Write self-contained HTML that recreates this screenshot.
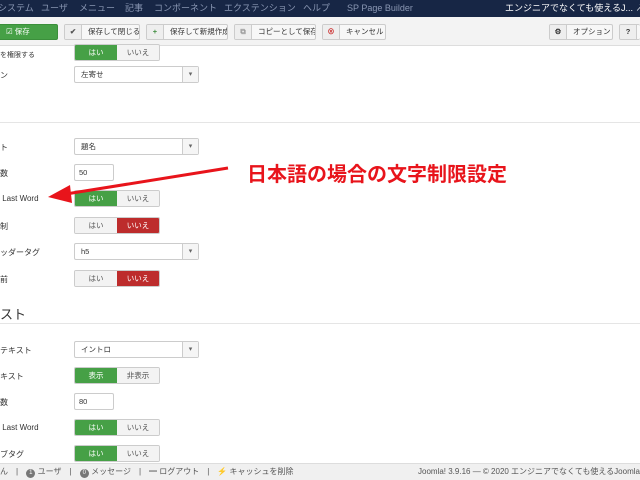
<!DOCTYPE html>
<html><head><meta charset="utf-8"><style>
*{box-sizing:border-box;margin:0;padding:0}
body{width:640px;height:480px;overflow:hidden;background:#fff;font-family:"Liberation Sans","Noto Sans CJK JP",sans-serif;font-size:8px;color:#333;position:relative}
.a{position:absolute}
.nav{left:0;top:0;width:640px;height:17px;background:#172645;color:#8a97b3;font-size:9px;line-height:17px;white-space:nowrap;overflow:hidden}
.nav span{position:absolute;top:0}
.tb{left:0;top:17px;width:640px;height:29px;background:#f3f3f3;border-bottom:1px solid #ddd}
.btn{position:absolute;top:24px;height:16px;background:#f7f7f7;border:1px solid #ccc;border-radius:2px;font-size:7.5px;line-height:14px;color:#333;white-space:nowrap;overflow:hidden}
.btn i{display:inline-block;width:17px;height:14px;border-right:1px solid #ccc;text-align:center;font-style:normal;font-weight:bold;margin-right:6px;background:#eee}
.lab{position:absolute;left:0;font-size:8px;color:#333;white-space:nowrap}
.sel{position:absolute;left:74px;width:125px;height:17px;border:1px solid #ccc;border-radius:2px;background:#fff;font-size:7.5px;line-height:15px;padding-left:6px}
.sel:after{content:"▾";position:absolute;right:0;top:0;width:15px;height:15px;border-left:1px solid #ccc;background:#f5f5f5;text-align:center;font-size:7px;color:#666}
.inp{position:absolute;left:74px;width:40px;height:17px;border:1px solid #ccc;border-radius:2px;font-size:7.5px;line-height:15px;padding-left:4px}
.tg{position:absolute;left:74px;width:86px;height:17px;border:1px solid #ccc;border-radius:2px;display:flex;font-size:7.5px;line-height:15px;overflow:hidden}
.tg span{flex:1;text-align:center;background:#f3f3f3;color:#555}
.tg .g{background:#46a046;color:#fff}
.tg .r{background:#bd2c2c;color:#fff}
.hr{position:absolute;left:0;width:640px;height:1px;background:#e5e5e5}
.ft{left:0;top:463px;width:640px;height:17px;background:#f0f0f0;border-top:1px solid #ddd;font-size:8px;line-height:16px;color:#555;white-space:nowrap;overflow:hidden}
.bd{display:inline-block;background:#777;color:#fff;border-radius:6px;padding:0 3px;font-size:6px;line-height:9px}
</style></head><body>
<div class="a nav"><span style="left:-2px">システム</span><span style="left:41px">ユーザ</span><span style="left:79px">メニュー</span><span style="left:125px">記事</span><span style="left:154px">コンポーネント</span><span style="left:224px">エクステンション</span><span style="left:303px">ヘルプ</span><span style="left:347px">SP Page Builder</span><span style="left:505px;color:#fff">エンジニアでなくても使えるJ... ↗</span></div>
<div class="a tb"></div>
<div class="btn" style="left:-2px;width:60px;background:#46a046;border-color:#3b8f3b;color:#fff;padding-left:7px">☑ 保存</div>
<div class="btn" style="left:64px;width:76px"><i style="color:#555">✔</i>保存して閉じる</div>
<div class="btn" style="left:146px;width:82px"><i style="color:#3a8a3a">+</i>保存して新規作成</div>
<div class="btn" style="left:234px;width:82px"><i style="color:#999">⧉</i>コピーとして保存</div>
<div class="btn" style="left:322px;width:64px"><i style="color:#c33">⊗</i>キャンセル</div>
<div class="btn" style="left:549px;width:64px"><i>⚙</i>オプション</div>
<div class="btn" style="left:619px;width:21px;border-right:none"><i>?</i></div>

<div class="lab" style="top:50px;font-size:7px">を権限する</div>
<div class="tg" style="top:44px;height:17px"><span class="g">はい</span><span>いいえ</span></div>
<div class="lab" style="top:70px">ン</div>
<div class="sel" style="top:66px">左寄せ</div>
<div class="hr" style="top:122px"></div>

<div class="lab" style="top:142px">ト</div><div class="sel" style="top:138px">題名</div>
<div class="lab" style="top:168px">数</div><div class="inp" style="top:164px">50</div>
<div class="lab" style="top:194px">&nbsp;Last Word</div><div class="tg" style="top:190px"><span class="g">はい</span><span>いいえ</span></div>
<div class="lab" style="top:221px">制</div><div class="tg" style="top:217px"><span>はい</span><span class="r">いいえ</span></div>
<div class="lab" style="top:247px">ッダータグ</div><div class="sel" style="top:243px">h5</div>
<div class="lab" style="top:274px">前</div><div class="tg" style="top:270px"><span>はい</span><span class="r">いいえ</span></div>

<div class="lab" style="top:304px;font-size:13px">スト</div>
<div class="hr" style="top:323px"></div>
<div class="lab" style="top:345px">テキスト</div><div class="sel" style="top:341px">イントロ</div>
<div class="lab" style="top:371px">キスト</div><div class="tg" style="top:367px"><span class="g">表示</span><span>非表示</span></div>
<div class="lab" style="top:397px">数</div><div class="inp" style="top:393px">80</div>
<div class="lab" style="top:423px">&nbsp;Last Word</div><div class="tg" style="top:419px"><span class="g">はい</span><span>いいえ</span></div>
<div class="lab" style="top:449px">ブタグ</div><div class="tg" style="top:445px"><span class="g">はい</span><span>いいえ</span></div>

<div class="a ft"><span style="margin-left:0">ん　|　<span class="bd">1</span> ユーザ　|　<span class="bd">0</span> メッセージ　|　━ ログアウト　|　⚡ キャッシュを削除</span><span class="a" style="left:418px;top:0">Joomla! 3.9.16 — © 2020 エンジニアでなくても使えるJoomla!の使い方</span></div>

<svg class="a" style="left:0;top:0" width="640" height="480">
<line x1="228" y1="168" x2="66" y2="194" stroke="#e8141b" stroke-width="3"/>
<polygon points="48,197 70,185 72,203" fill="#e8141b"/>
</svg>
<div class="a" style="left:247px;top:158px;font-size:20px;font-weight:bold;color:#e8141b;white-space:nowrap">日本語の場合の文字制限設定</div>
</body></html>
